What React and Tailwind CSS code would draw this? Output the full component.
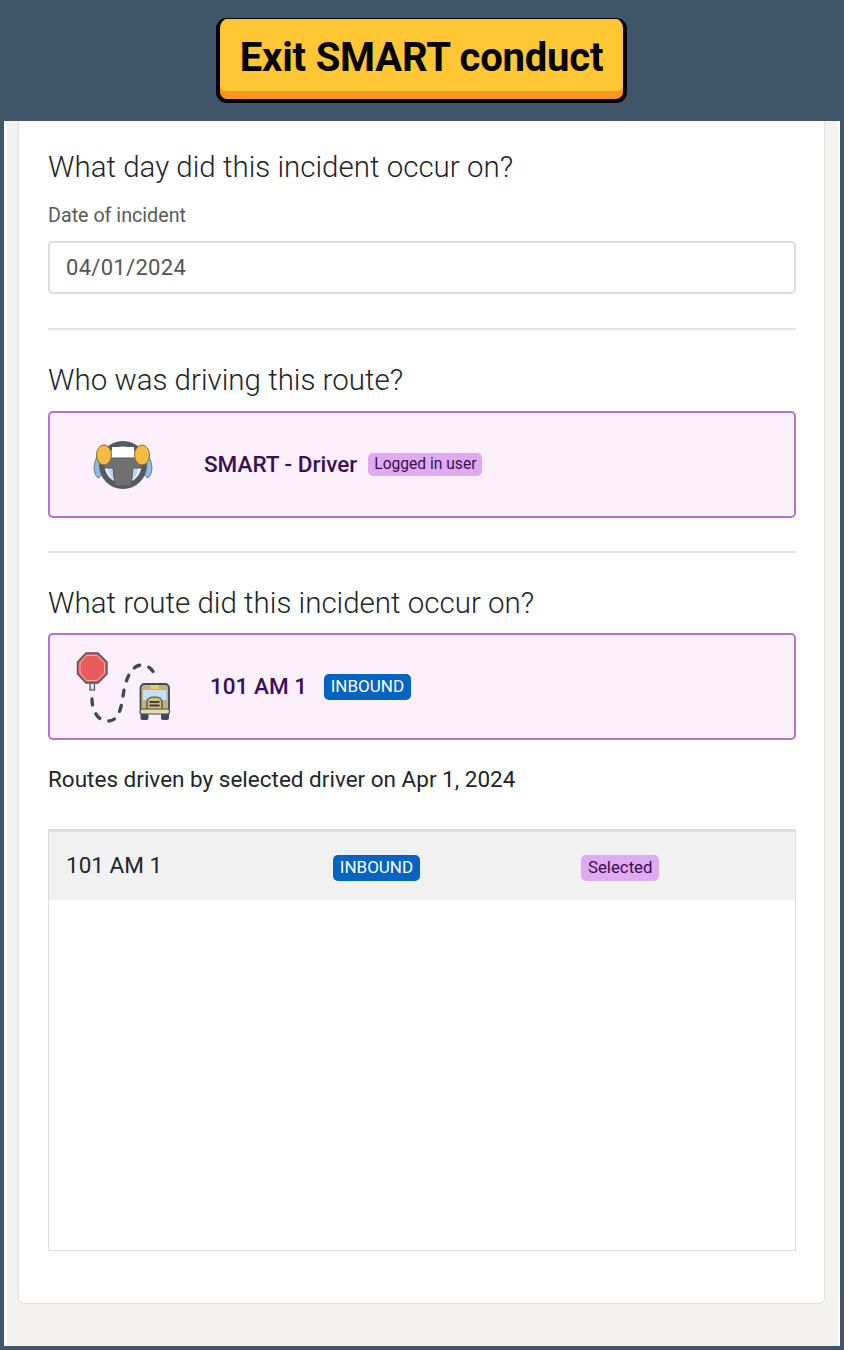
const WheelIcon = () => (
  <svg width="60" height="54" viewBox="0 0 60 54">
    <path d="M4 19 C0 27 0 35 5 40 L9 37 L9 22 Z" fill="#8fbbdc" stroke="#5a7a96" strokeWidth="1" />
    <path d="M56 19 C60 27 60 35 55 40 L51 37 L51 22 Z" fill="#8fbbdc" stroke="#5a7a96" strokeWidth="1" />
    <circle cx="30" cy="27" r="24" fill="#525a64" />
    <circle cx="30" cy="27" r="18.5" fill="#fcf0fd" />
    <path d="M15 30 L21 30 L22 42 C18 40 15 36 15 30 Z" fill="#b9d6ec" />
    <path d="M45 30 L39 30 L38 42 C42 40 45 36 45 30 Z" fill="#b9d6ec" />
    <path d="M19 9 H41 V20 H19 Z" fill="#ffffff" />
    <path d="M10 20 H50 L49 30 H40 L38 48 H22 L20 30 H11 Z" fill="#707070" stroke="#525a64" strokeWidth="1" />
    <ellipse cx="11" cy="17" rx="7.5" ry="10" fill="#f6bb42" stroke="#8a6d2a" strokeWidth="1" />
    <ellipse cx="49" cy="17" rx="7.5" ry="10" fill="#f6bb42" stroke="#8a6d2a" strokeWidth="1" />
  </svg>
)

const RouteIcon = () => (
  <svg width="98" height="74" viewBox="0 0 98 74">
    <rect x="16" y="32" width="4.5" height="8" fill="#e8e4d4" stroke="#4b5560" strokeWidth="1.2" />
    <path d="M12 3 L24 3 L33 12 L33 24 L24 33 L12 33 L3.5 24 L3.5 12 Z" fill="#e85c5c" stroke="#4b5560" strokeWidth="1.4" />
    <path d="M12.5 5.5 L23 5.5 L30.5 13 L30.5 23 L23 30.5 L12.5 30.5 L6 23 L6 13 Z" fill="#e85c5c" stroke="#f2b0b0" strokeWidth="1" />
    <path d="M18 49 C18 58 22 71 34 71 C44 71 47 60 49 46 C51 32 56 15 68 15 C74 15 79 20 81 25" fill="none" stroke="#3a4a5c" strokeWidth="3.4" strokeLinecap="round" strokeDasharray="6 9.5" />
    <rect x="66.5" y="63" width="8" height="7" rx="2" fill="#3d4a5c" />
    <rect x="87" y="63" width="8" height="7" rx="2" fill="#3d4a5c" />
    <rect x="66.5" y="34" width="28.5" height="28" rx="4" fill="#c2b278" stroke="#3d4a5c" strokeWidth="1.8" />
    <rect x="69" y="40" width="23.5" height="10" fill="#c4e0f4" />
    <rect x="76.5" y="35" width="8" height="4" fill="#f3cc5e" />
    <path d="M73 60 V52 C73 49 76 47 80.5 47 C85 47 88 49 88 52 V60 Z" fill="#d6bb6a" stroke="#3d4a5c" strokeWidth="1.2" />
    <path d="M75.5 52 H85.5 M75.5 55.5 H85.5" stroke="#3a3f4c" strokeWidth="2" />
    <rect x="66" y="59" width="29.5" height="5" rx="2" fill="#e6dcaa" stroke="#3d4a5c" strokeWidth="1.2" />
  </svg>
)

const InboundBadge = () => (
  <span className="h-[26px] w-[87px] flex items-center justify-center rounded-[5px] bg-[#0563c1] text-white text-[17px]">INBOUND</span>
)

export default function App() {
  return (
    <div className="h-[1350px] w-[844px] overflow-hidden bg-[#3e556a] font-['Roboto',sans-serif] flex flex-col">
      <header className="h-[121px] shrink-0 flex justify-center pt-[18px] pr-[1px]">
        <button className="h-[85px] w-[411px] rounded-[11px] border-x-4 border-t border-b-4 border-black bg-[#f7971e] overflow-hidden flex flex-col">
          <div className="h-[72px] w-full shrink-0 rounded-b-[6px] bg-[#ffc733] pt-[5px] flex items-center justify-center text-[40px] font-bold text-black tracking-[-0.2px]">
            Exit SMART conduct
          </div>
        </button>
      </header>

      <main className="flex-1 mx-1 mb-1 bg-white pl-[3px] pr-[2px] pb-0">
        <div className="h-full bg-[#f4f2f1] pl-[11px] pr-[13px] pb-[42px]">
          <div className="h-full rounded-b-[6px] border-x border-b border-[#e0e0e0] bg-white pl-[29px] pr-[28px] pt-[28px] text-[#212529]">
            <h2 className="text-[29.5px] font-light leading-[36px]">What day did this incident occur on?</h2>
            <label className="block mt-[19px] text-[19.7px] leading-[24px] text-[#5a5a5a]">Date of incident</label>
            <div className="mt-[13px] h-[53px] rounded-[5px] border-2 border-[#dddddd] px-[16px] flex items-center text-[22px] tracking-[0.3px] text-[#555]">04/01/2024</div>

            <hr className="mt-[34px] border-t-2 border-[#e4e4e4]" />

            <h2 className="mt-[32px] text-[29.5px] font-light leading-[36px]">Who was driving this route?</h2>
            <div className="mt-[13px] h-[107px] rounded-[5px] border-2 border-[#b176cc] bg-[#fcf0fd] flex items-center text-[#3a0f55]">
              <div className="ml-[43px] w-[111px] shrink-0"><WheelIcon /></div>
              <span className="text-[22.5px] font-medium">SMART - Driver</span>
              <span className="ml-[11px] h-[23px] px-[6px] flex items-center rounded-[5px] bg-[#deaaf0] text-[15.6px]">Logged in user</span>
            </div>

            <hr className="mt-[33px] border-t-2 border-[#e4e4e4]" />

            <h2 className="mt-[32px] text-[29.5px] font-light leading-[36px]">What route did this incident occur on?</h2>
            <div className="mt-[12px] h-[107px] rounded-[5px] border-2 border-[#b176cc] bg-[#fcf0fd] flex items-center text-[#3a0f55]">
              <div className="ml-[24px] w-[136px] shrink-0"><RouteIcon /></div>
              <span className="text-[22.5px] font-medium">101 AM 1</span>
              <span className="ml-[17px]"><InboundBadge /></span>
            </div>

            <p className="mt-[25px] text-[22.5px] leading-[28px]">Routes driven by selected driver on Apr 1, 2024</p>

            <div className="mt-[36px] h-[422px] border border-[#dedede] border-t-[3px]">
              <div className="h-[68px] bg-[#f1f1f1] flex items-center">
                <span className="ml-[17px] w-[267px] text-[22.5px]">101 AM 1</span>
                <span className="mt-[4px]"><InboundBadge /></span>
                <span className="mt-[4px] ml-[161px] h-[26px] px-[7px] flex items-center rounded-[5px] bg-[#deaaf0] text-[#3a0f55] text-[16.8px]">Selected</span>
              </div>
            </div>
          </div>
        </div>
      </main>
    </div>
  )
}
